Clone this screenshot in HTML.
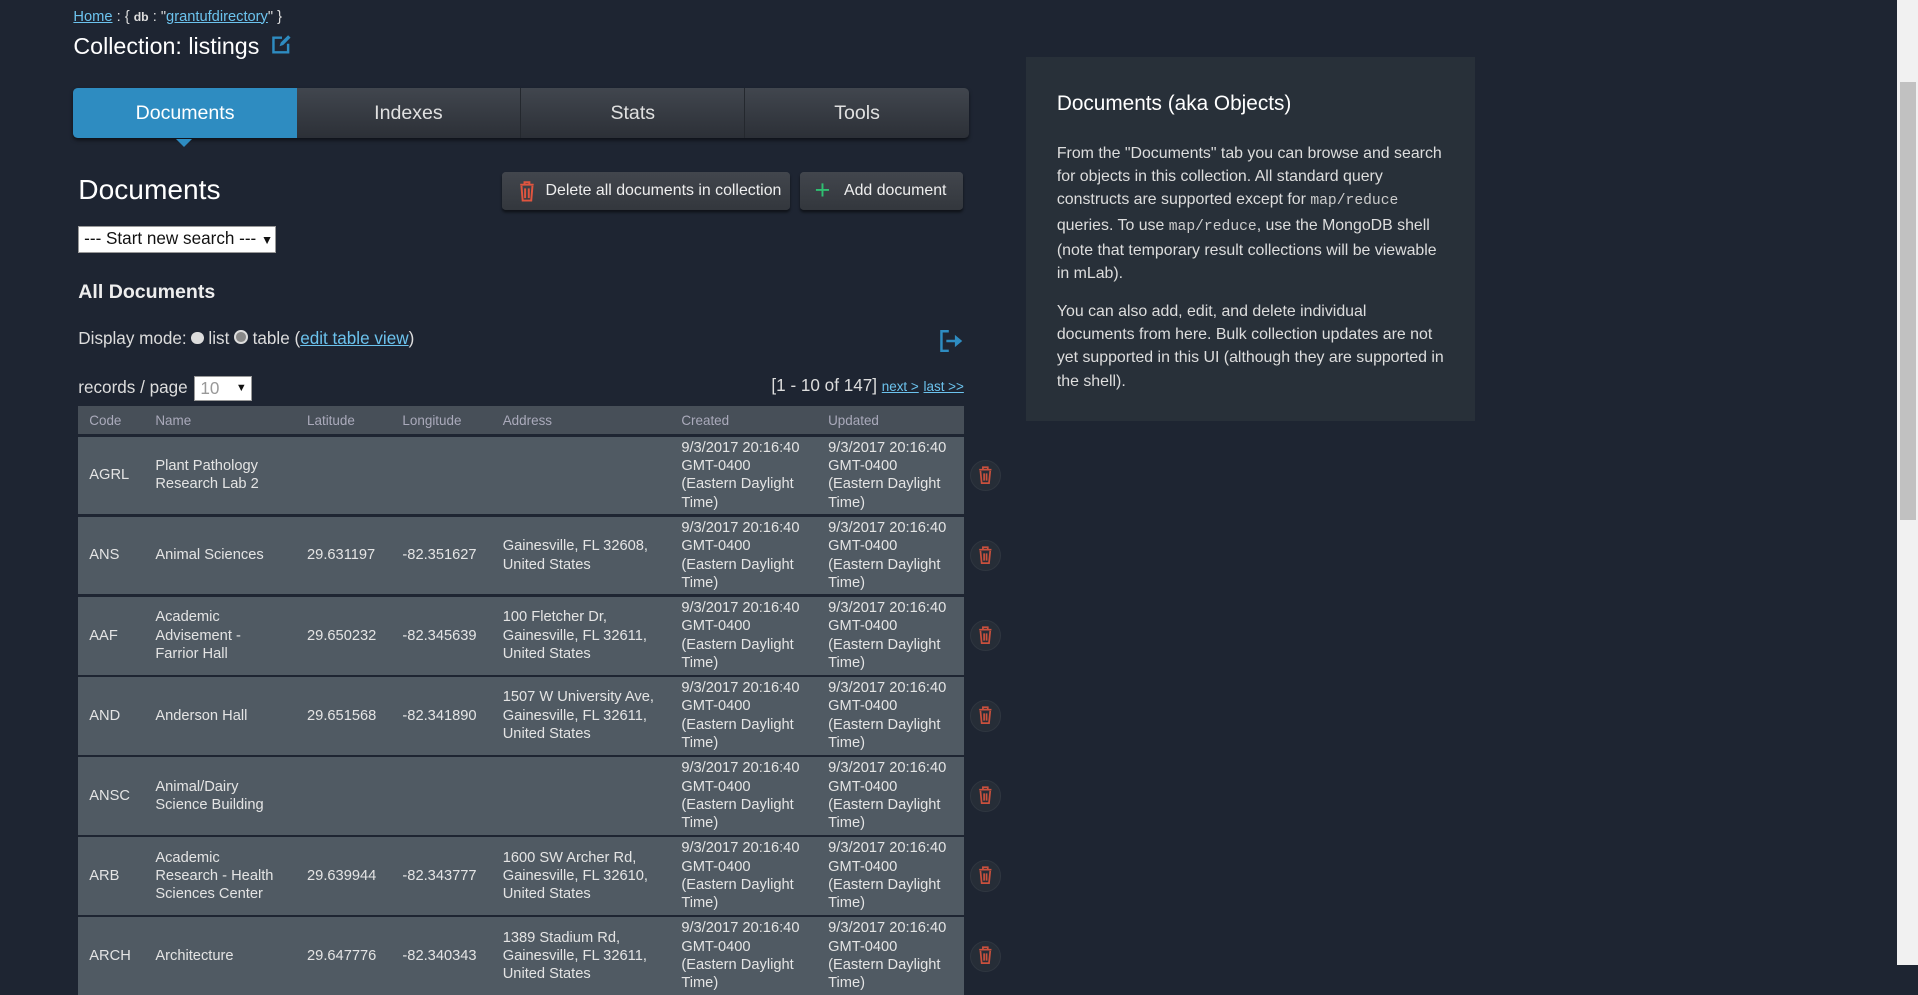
<!DOCTYPE html>
<html><head><meta charset="utf-8"><style>
html{zoom:1.2232}
body{margin:0;width:1568px;height:789px;overflow:hidden;background:#1e2532;font-family:"Liberation Sans",sans-serif;color:#e6e6e6;position:relative}
.a{position:absolute}
a{color:#6cc3ee;text-decoration:underline}
.tabs{left:60px;top:72px;width:732px;height:41px;display:flex;border-radius:4px;background:linear-gradient(#41464e,#2c3037);box-shadow:0 2px 3px rgba(0,0,0,.5)}
.tab{flex:1;text-align:center;line-height:41px;font-size:16px;color:#e0e0e0;border-left:1px solid #24282e}
.tab.on{background:#2e8cc1;color:#fff;border-radius:4px 0 0 4px;border:none;position:relative}
.tab.on:after{content:"";position:absolute;left:84px;bottom:-7px;border:7px solid transparent;border-bottom:0;border-top-color:#2e8cc1}
.btn{top:141px;height:31px;border-radius:3px;background:linear-gradient(#42464d,#33373d);box-shadow:0 2px 2px rgba(0,0,0,.5);font-size:13px;color:#eee;line-height:31px;box-sizing:border-box}
.sel{background:#fff;color:#111;font-size:14px;box-sizing:border-box;border:1px solid #999}
.tbl{left:64px;top:332px;width:724px}
.hd{height:23px;background:#474f58;font-size:11px;color:#aab;position:relative}
.row{height:63.5px;margin-top:2px;background:#505a63;position:relative;font-size:12px;line-height:15px;color:#e4e4e4}
.c{position:absolute;top:0;bottom:0;display:flex;align-items:center}
.tr{position:absolute;left:729px;width:24px;height:24px;border-radius:50%;border:1px solid #2f3640;background:#262d37;top:19px}
p{margin:0 0 12px}
code{font-family:"Liberation Mono",monospace;font-size:12px;color:#ccc}
</style></head><body>
<div class="a" style="left:60px;top:7px;font-size:12px;color:#ddd"><a>Home</a> : { <b style="font-size:10px">db</b> : "<a>grantufdirectory</a>" }</div>
<div class="a" style="left:60px;top:27px;font-size:19px;color:#fff">Collection: listings
<svg width="17" height="17" viewBox="0 0 17 17" style="vertical-align:-1px;margin-left:4px"><path d="M9 3H2v12h12V8" fill="none" stroke="#2e8cc1" stroke-width="2"/><path d="M7 10l1-3 6-6 2 2-6 6z" fill="#2e8cc1"/></svg></div>
<div class="a tabs"><div class="tab on">Documents</div><div class="tab" style="border:none">Indexes</div><div class="tab">Stats</div><div class="tab">Tools</div></div>
<div class="a" style="left:64px;top:142px;font-size:23px;color:#fff">Documents</div>
<div class="a btn" style="left:410px;width:236px;padding-left:36px"><svg class="a" style="left:14px;top:7px" width="13" height="17" viewBox="0 0 13 17"><path d="M1 3h11M4.5 3V1h4v2M2 4l1 12h7l1-12M5 6v8M8 6v8" fill="none" stroke="#e0553f" stroke-width="1.6"/></svg>Delete all documents in collection</div>
<div class="a btn" style="left:654px;width:133px;padding-left:36px"><span class="a" style="left:12px;top:0;color:#2fbf71;font-size:22px">+</span>Add document</div>
<div class="a sel" style="left:64px;top:185px;width:162px;height:22px;line-height:20px;padding-left:4px">--- Start new search --- <span style="font-size:10px">▼</span></div>
<div class="a" style="left:64px;top:230px;font-size:16px;font-weight:bold;color:#eee">All Documents</div>
<div class="a" style="left:64px;top:269px;font-size:14px;color:#ddd">Display mode: <span style="display:inline-block;width:10px;height:10px;border-radius:50%;background:#ddd"></span> list <span style="display:inline-block;width:8px;height:8px;border-radius:50%;background:#888;border:2px solid #ddd"></span> table (<a>edit table view</a>)</div>
<svg class="a" style="left:768px;top:270px" width="20" height="18" viewBox="0 0 20 18"><path d="M8 1H2v16h6" fill="none" stroke="#2e8cc1" stroke-width="2"/><path d="M6 8h7V4l6 5-6 5v-4H6z" fill="#2e8cc1"/></svg>
<div class="a" style="left:64px;top:309px;font-size:14px;color:#ddd">records / page</div>
<div class="a sel" style="left:159px;top:307px;width:47px;height:21px;line-height:19px;padding-left:4px;color:#999">10<span class="a" style="color:#111;font-size:9px;left:33px;top:0">▼</span></div>
<div class="a" style="left:560px;top:307px;width:228px;text-align:right;font-size:14px;color:#ddd">[1 - 10 of 147] <a style="font-size:11px">next &gt;</a> <a style="font-size:11px">last &gt;&gt;</a></div>
<div class="a tbl">
<div class="hd"><div class="c" style="left:9px">Code</div><div class="c" style="left:63px">Name</div><div class="c" style="left:187px">Latitude</div><div class="c" style="left:265px">Longitude</div><div class="c" style="left:347px">Address</div><div class="c" style="left:493px">Created</div><div class="c" style="left:613px">Updated</div></div>
</div>
<script>
var R=[["AGRL","Plant Pathology<br>Research Lab 2","","",""],["ANS","Animal Sciences","29.631197","-82.351627","Gainesville, FL 32608,<br>United States"],["AAF","Academic<br>Advisement -<br>Farrior Hall","29.650232","-82.345639","100 Fletcher Dr,<br>Gainesville, FL 32611,<br>United States"],["AND","Anderson Hall","29.651568","-82.341890","1507 W University Ave,<br>Gainesville, FL 32611,<br>United States"],["ANSC","Animal/Dairy<br>Science Building","","",""],["ARB","Academic<br>Research - Health<br>Sciences Center","29.639944","-82.343777","1600 SW Archer Rd,<br>Gainesville, FL 32610,<br>United States"],["ARCH","Architecture","29.647776","-82.340343","1389 Stadium Rd,<br>Gainesville, FL 32611,<br>United States"]];
var d="9/3/2017 20:16:40<br>GMT-0400<br>(Eastern Daylight<br>Time)",h="";
R.forEach(function(r){h+='<div class="row"><div class="c" style="left:9px">'+r[0]+'</div><div class="c" style="left:63px">'+r[1]+'</div><div class="c" style="left:187px">'+r[2]+'</div><div class="c" style="left:265px">'+r[3]+'</div><div class="c" style="left:347px">'+r[4]+'</div><div class="c" style="left:493px">'+d+'</div><div class="c" style="left:613px">'+d+'</div><div class="tr"><svg style="position:absolute;left:6px;top:4px" width="12" height="15" viewBox="0 0 12 15"><path d="M1 3h10M4 3V1h4v2M2 4l1 10h6l1-10M5 6v6M7 6v6" fill="none" stroke="#c9503d" stroke-width="1.4"/></svg></div></div>'});
document.querySelector('.tbl').innerHTML+=h;
</script>
<div class="a" style="left:839px;top:47px;width:367px;height:297px;background:#283039"></div>
<div class="a" style="left:864px;top:75px;font-size:17px;color:#fff">Documents (aka Objects)</div>
<div class="a" style="left:864px;top:116px;width:318px;font-size:13px;line-height:19px;color:#ddd"><p>From the "Documents" tab you can browse and search for objects in this collection. All standard query constructs are supported except for <code>map/reduce</code> queries. To use <code>map/reduce</code>, use the MongoDB shell (note that temporary result collections will be viewable in mLab).</p><p>You can also add, edit, and delete individual documents from here. Bulk collection updates are not yet supported in this UI (although they are supported in the shell).</p></div>
<div class="a" style="left:1551px;top:0;width:17px;height:789px;background:#f1f1f1"></div>
<div class="a" style="left:1553px;top:67px;width:13px;height:358px;background:#c1c1c1"></div>
</body></html>
